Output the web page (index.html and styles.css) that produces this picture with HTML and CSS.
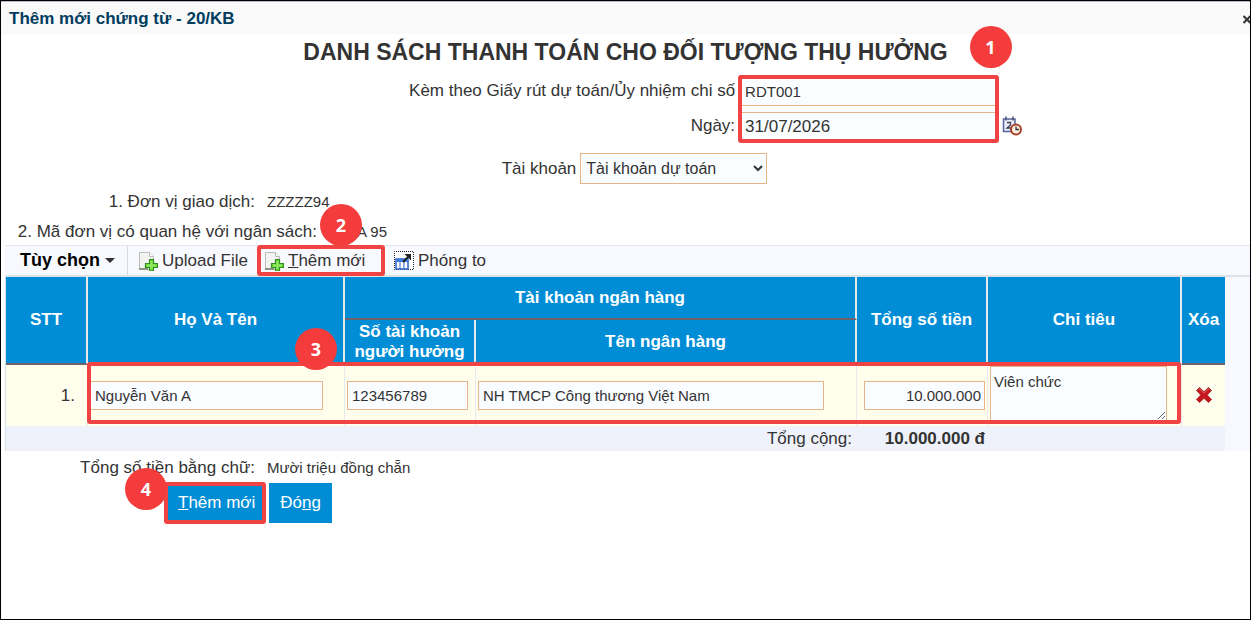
FILE: index.html
```html
<!DOCTYPE html>
<html lang="vi">
<head>
    <meta charset="UTF-8">
    <meta name="viewport" content="width=device-width, initial-scale=1.0">
    <title>Thêm mới chứng từ - 20/KB</title>
    <link rel="stylesheet" href="styles.css">
</head>
<body>
    <svg class="sprite" aria-hidden="true">
        <symbol id="icon-add" viewBox="0 0 20 20">
            <path d="M1.5 1.5h10l4 4v13h-14z" fill="#f3f4f1" stroke="#b9bdb5"/>
            <path d="M11.5 1.5v4h4" fill="#fff" stroke="#b9bdb5"/>
            <path d="M1 18h9" stroke="#8a9482" stroke-width="2"/>
            <path d="M11.5 8.500h4v4h4v4h-4v3.500h-4v-3.500h-4v-4h4z" fill="#6fd53f" stroke="#2f8f1f" stroke-width="1.200"/>
            <path d="M13.500 10v8M9 14.500h9" stroke="#8fe85c" stroke-width="2"/>
        </symbol>
    </svg>

    <div class="dialog">
        <header class="dialog-header">
            <h1>Thêm mới chứng từ - 20/KB</h1>
            <button type="button" class="close" aria-label="Close">
                <svg width="7" height="9" viewBox="0 0 7 9"><path d="M0.500 1l7 7M7.500 1l-7 7" stroke="#333" stroke-width="2"/></svg>
            </button>
        </header>

        <form class="content">
            <div class="heading">
                <h2>DANH SÁCH THANH TOÁN CHO ĐỐI TƯỢNG THỤ HƯỞNG</h2>
                <span class="step step-1">1</span>
            </div>

            <div class="voucher">
                <div class="voucher-labels">
                    <label for="so">Kèm theo Giấy rút dự toán/Ủy nhiệm chi số</label>
                    <label for="ngay">Ngày:</label>
                </div>
                <div class="voucher-fields">
                    <input type="text" id="so" value="RDT001">
                    <input type="text" id="ngay" class="date" value="31/07/2026">
                    <span class="mark"></span>
                </div>
                <button type="button" class="calendar" aria-label="Chọn ngày">
                    <svg width="20" height="20" viewBox="0 0 20 20">
                        <path d="M1.500 3h11.500v12.500h-11.500z" fill="#e9ecfb" stroke="#5a649c" stroke-width="1.500"/>
                        <path d="M4 0.500v4M11 0.500v4" stroke="#4a5078" stroke-width="1.500"/>
                        <path d="M5 6.500h3.500v2.500l-3.500 3h4" fill="none" stroke="#3c3f55" stroke-width="1.300"/>
                        <circle cx="14" cy="13.500" r="5" fill="#fdeedd" stroke="#a8412c" stroke-width="2"/>
                        <path d="M14 10.500v3h3" fill="none" stroke="#333" stroke-width="1.300"/>
                    </svg>
                </button>
            </div>

            <div class="account">
                <label for="taikhoan">Tài khoản</label>
                <select id="taikhoan">
                    <option>Tài khoản dự toán</option>
                </select>
            </div>

            <div class="info">
                <span class="info-label">1. Đơn vị giao dịch:</span>
                <span class="info-value">ZZZZZ94</span>
            </div>
            <div class="info info-code">
                <span class="info-label info-wide">2. Mã đơn vị có quan hệ với ngân sách:</span>
                <span class="info-value">A 95</span>
                <span class="step step-2">2</span>
            </div>

            <div class="toolbar">
                <button type="button" class="options">Tùy chọn <span class="caret"></span></button>
                <button type="button" class="tool">
                    <svg width="20" height="20"><use href="#icon-add"/></svg>
                    Upload File
                </button>
                <button type="button" class="tool tool-add">
                    <svg width="20" height="20"><use href="#icon-add"/></svg>
                    <span><u>T</u>hêm mới</span>
                    <span class="mark"></span>
                </button>
                <button type="button" class="tool">
                    <svg width="20" height="20" viewBox="0 0 20 20">
                        <rect x="0.500" y="0.500" width="19" height="18" fill="#fff" stroke="#222" stroke-dasharray="1 1" stroke-dashoffset="0.500"/>
                        <rect x="2" y="8" width="12" height="10" fill="#fff" stroke="#2a62c8" stroke-width="1.500"/>
                        <path d="M2 8h12v3h-12z" fill="#3f7be0"/>
                        <path d="M6 11v7M10 11v7" stroke="#2a62c8"/>
                        <path d="M9 11l6-6" stroke="#222" stroke-width="2"/>
                        <path d="M10.500 3h6.500v6.500z" fill="#222"/>
                    </svg>
                    Phóng to
                </button>
            </div>

            <div class="grid-area">
                <div class="grid-wrap">
                    <table>
                        <colgroup>
                            <col class="col-stt">
                            <col class="col-name">
                            <col class="col-money">
                            <col>
                            <col class="col-money">
                            <col class="col-target">
                            <col class="col-delete">
                        </colgroup>
                        <thead>
                            <tr>
                                <th rowspan="2">STT</th>
                                <th rowspan="2">Họ Và Tên</th>
                                <th colspan="2">Tài khoản ngân hàng</th>
                                <th rowspan="2">Tổng số tiền</th>
                                <th rowspan="2">Chỉ tiêu</th>
                                <th rowspan="2">Xóa</th>
                            </tr>
                            <tr>
                                <th>Số tài khoản người hưởng</th>
                                <th>Tên ngân hàng</th>
                            </tr>
                        </thead>
                        <tbody>
                            <tr>
                                <td class="stt">1.</td>
                                <td><input type="text" class="name" aria-label="Họ Và Tên" value="Nguyễn Văn A"></td>
                                <td><input type="text" class="number" aria-label="Số tài khoản người hưởng" value="123456789"></td>
                                <td><input type="text" class="bank" aria-label="Tên ngân hàng" value="NH TMCP Công thương Việt Nam"></td>
                                <td><input type="text" class="number money" aria-label="Tổng số tiền" value="10.000.000"></td>
                                <td class="target"><textarea aria-label="Chỉ tiêu">Viên chức</textarea></td>
                                <td class="center">
                                    <button type="button" class="delete" aria-label="Xóa">
                                        <svg width="18" height="18" viewBox="0 0 18 18">
                                            <path d="M1.500 4.500l3-3 4.500 4.200 4.500-4.200 3 3-4.200 4.500 4.200 4.500-3 3-4.500-4.200-4.500 4.200-3-3 4.200-4.500z" fill="#c4161c" stroke="#a33" stroke-linejoin="round"/>
                                            <path d="M3.500 4l1-1 4.500 4.200 4.500-4.200 1 1" fill="none" stroke="#e2605f"/>
                                        </svg>
                                    </button>
                                </td>
                            </tr>
                        </tbody>
                        <tfoot>
                            <tr>
                                <td colspan="4">Tổng cộng:</td>
                                <td class="sum">10.000.000 đ</td>
                                <td colspan="2"></td>
                            </tr>
                        </tfoot>
                    </table>
                    <span class="mark"></span>
                    <span class="step step-3">3</span>
                </div>
            </div>

            <div class="info info-total">
                <span class="info-label">Tổng số tiền bằng chữ:</span>
                <span class="info-value">Mười triệu đồng chẵn</span>
            </div>

            <div class="actions">
                <button type="button" class="button button-add"><u>T</u>hêm mới<span class="mark"></span></button>
                <button type="button" class="button">Đó<u>ng</u></button>
                <span class="step step-4">4</span>
            </div>
        </form>
    </div>
</body>
</html>
```
FILE: styles.css
```css
* {
    box-sizing: border-box;
}
body {
    margin: 0;
    font-family: "Liberation Sans", Arial, sans-serif;
    font-size: 17px;
    color: #333;
    background-color: white;
}
button, input, select, textarea {
    font-family: inherit;
    font-size: 17px;
    color: #333;
}
button {
    border: 0;
    padding: 0;
    background: none;
}
.sprite {
    display: none;
}
.dialog {
    min-height: 100vh;
    border: 1px solid black;
    overflow: hidden;
}
.dialog-header {
    display: flex;
    align-items: center;
    justify-content: space-between;
    height: 33px;
    padding: 2px 0 0 8px;
    border-top: 1px solid #b4bac8;
    background-color: #f9f9f9;
}
.dialog-header h1 {
    margin: 0;
    font-size: 17px;
    color: #003c5e;
}
.close {
    display: flex;
}
.content {
    padding-left: 4px;
}

/* Khung đỏ và số thứ tự bước */
.mark {
    position: absolute;
    inset: -1px;
    border: 4px solid #f04444;
    border-radius: 3px;
    pointer-events: none;
}
.step {
    position: absolute;
    width: 42px;
    height: 42px;
    border-radius: 50%;
    background-color: #f43c3c;
    color: white;
    font: bold 18px/42px "Open Sans", sans-serif;
    text-align: center;
}
.step-1 {
    left: calc(50% + 344px);
    top: -8px;
}
.step-2 {
    left: 315px;
    top: -13px;
}
.step-3 {
    left: 290px;
    top: 51px;
}
.step-4 {
    left: 120px;
    top: -15px;
}

.heading {
    position: relative;
    margin-left: -4px;
    text-align: center;
}
.heading h2 {
    margin: 0;
    font-size: 23px;
    line-height: 36px;
}
.voucher {
    display: flex;
    gap: 4px;
    margin-top: 6px;
}
.voucher-labels {
    display: flex;
    flex-direction: column;
    flex: 0 0 calc(58% + 8px);
    gap: 5px;
    line-height: 30px;
    text-align: right;
}
.voucher-fields {
    position: relative;
    display: flex;
    flex-direction: column;
    gap: 6px;
    width: 259px;
}
input, textarea, select {
    height: 30px;
    border: 1px solid #e5b588;
    background-color: #fafdff;
}
input, textarea {
    padding: 0 5px;
    font-size: 15px;
}
.voucher-fields .date {
    font-size: 17px;
}
.calendar {
    align-self: flex-end;
    height: 28px;
}
.account {
    display: flex;
    align-items: center;
    justify-content: center;
    gap: 4px;
    margin-top: 11px;
    padding-left: 14px;
}
.account select {
    width: 187px;
    height: 31px;
    padding: 0 1px;
    font-size: 16px;
}
.info {
    position: relative;
    display: flex;
    gap: 12px;
    line-height: 30px;
}
.account + .info {
    margin-top: 3px;
}
.info-label {
    width: 250px;
    text-align: right;
}
.info-wide {
    width: 312px;
}
.info-code {
    gap: 40px;
}
.info-value {
    font-size: 15px;
}

.toolbar {
    display: flex;
    align-items: center;
    gap: 10px;
    height: 32px;
    margin-top: -2px;
    border-top: 1px solid #e3e6ec;
    border-bottom: 2px solid #dde2e9;
    background-color: #f8f9fe;
}
.options {
    display: flex;
    align-items: center;
    gap: 5px;
    align-self: stretch;
    width: 123px;
    padding-left: 15px;
    border-right: 1px solid #d5dbe4;
    font-size: 18px;
    font-weight: bold;
    color: black;
}
.caret {
    border: 5px solid transparent;
    border-top-color: #333;
    border-bottom: 0;
}
.tool {
    display: flex;
    align-items: center;
    gap: 4px;
}
.tool-add {
    position: relative;
    width: 126px;
    height: 29px;
    padding-left: 6px;
}

.grid-area {
    background-color: #f8f9fe;
}
.grid-wrap {
    position: relative;
    margin-right: 25px;
}
.grid-wrap .mark {
    inset: auto 44px 27px 82px;
    height: 62px;
}
table {
    width: 100%;
    table-layout: fixed;
    border-collapse: separate;
    border-spacing: 0;
    border-left: 1px solid #d5dfe8;
}
.col-stt {
    width: 82px;
}
.col-name {
    width: 257px;
}
.col-money {
    width: 131px;
}
.col-target {
    width: 194px;
}
.col-delete {
    width: 43px;
}
th {
    height: 43px;
    padding: 0 4px;
    border-right: 2px solid #e6e9ec;
    border-bottom: 2px solid #6c6468;
    background-color: #008dd6;
    color: white;
    line-height: 20px;
}
th:last-child, td:last-child {
    padding: 0;
    border-right: 0;
}
thead tr + tr th {
    height: 45px;
}
thead tr + tr th:last-child {
    border-right: 2px solid #e6e9ec;
}
td {
    padding: 0 2px;
}
tbody td {
    height: 61px;
    border-right: 1px solid #e6e9ee;
    background-color: #fffdec;
}
tbody input {
    display: block;
    height: 29px;
    padding: 0 4px;
}
.stt {
    padding-right: 12px;
    text-align: right;
}
.name {
    width: 233px;
}
.number {
    width: 121px;
}
.bank {
    width: 92%;
}
.money {
    margin-left: auto;
    padding: 0 3px;
    text-align: right;
}
.target {
    vertical-align: top;
}
textarea {
    display: block;
    width: 177px;
    height: 55px;
    margin-top: 1px;
    padding: 6px 3px;
}
.center {
    text-align: center;
}
.delete {
    padding-top: 4px;
}
.delete svg {
    display: block;
}
tfoot td {
    height: 25px;
    background-color: #eff2fb;
    text-align: right;
}
tfoot td:first-child {
    padding-right: 5px;
}
tfoot .sum {
    padding-right: 3px;
    font-weight: bold;
}

.info-total {
    margin-top: 2px;
}
.actions {
    position: relative;
    display: flex;
    gap: 4px;
    padding-left: 160px;
}
.button {
    position: relative;
    height: 40px;
    padding: 0 11px;
    background-color: #008dd6;
    color: white;
}
.button-add {
    padding: 0 10px 0 13px;
}
```
